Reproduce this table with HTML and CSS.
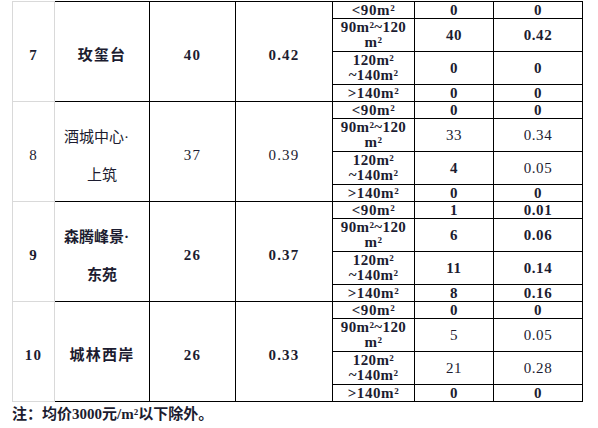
FILE: index.html
```html
<!DOCTYPE html>
<html lang="zh">
<head>
<meta charset="utf-8">
<link rel="stylesheet" href="styles.css">
</head>
<body>
<table class="grid">
<colgroup>
<col class="w1"><col class="w2"><col class="w3"><col class="w4"><col class="w5"><col class="w6"><col class="w7">
</colgroup>
<tbody>
<tr class="s">
<td rowspan="4" class="idx main b">7</td><td rowspan="4" class="main b">玫玺台</td><td rowspan="4" class="main b">40</td><td rowspan="4" class="main b">0.42</td>
<td class="b">&lt;90m²</td><td class="b">0</td><td class="b">0</td>
</tr>
<tr class="t"><td class="two b">90m²~120<br>m²</td><td class="b">40</td><td class="b">0.42</td></tr>
<tr class="t"><td class="two b">120m²<br>~140m²</td><td class="b">0</td><td class="b">0</td></tr>
<tr class="s"><td class="b">&gt;140m²</td><td class="b">0</td><td class="b">0</td></tr>

<tr class="s">
<td rowspan="4" class="idx main">8</td><td rowspan="4" class="main"><div class="name"><span class="first">酒城中心·</span><br>上筑</div></td><td rowspan="4" class="main">37</td><td rowspan="4" class="main">0.39</td>
<td class="b">&lt;90m²</td><td class="b">0</td><td class="b">0</td>
</tr>
<tr class="t"><td class="two b">90m²~120<br>m²</td><td>33</td><td>0.34</td></tr>
<tr class="t"><td class="two b">120m²<br>~140m²</td><td class="b">4</td><td>0.05</td></tr>
<tr class="s"><td class="b">&gt;140m²</td><td class="b">0</td><td class="b">0</td></tr>

<tr class="s">
<td rowspan="4" class="idx main b">9</td><td rowspan="4" class="main b"><div class="name"><span class="first">森腾峰景·</span><br>东苑</div></td><td rowspan="4" class="main b">26</td><td rowspan="4" class="main b">0.37</td>
<td class="b">&lt;90m²</td><td class="b">1</td><td class="b">0.01</td>
</tr>
<tr class="t"><td class="two b">90m²~120<br>m²</td><td class="b">6</td><td class="b">0.06</td></tr>
<tr class="t"><td class="two b">120m²<br>~140m²</td><td class="b">11</td><td class="b">0.14</td></tr>
<tr class="s"><td class="b">&gt;140m²</td><td class="b">8</td><td class="b">0.16</td></tr>

<tr class="s">
<td rowspan="4" class="idx main b">10</td><td rowspan="4" class="main b">城林西岸</td><td rowspan="4" class="main b">26</td><td rowspan="4" class="main b">0.33</td>
<td class="b">&lt;90m²</td><td class="b">0</td><td class="b">0</td>
</tr>
<tr class="t"><td class="two b">90m²~120<br>m²</td><td>5</td><td>0.05</td></tr>
<tr class="t"><td class="two b">120m²<br>~140m²</td><td>21</td><td>0.28</td></tr>
<tr class="s"><td class="b">&gt;140m²</td><td class="b">0</td><td class="b">0</td></tr>
</tbody>
</table>
<p class="note">注：均价3000元/m²以下除外。</p>
</body>
</html>
```

FILE: styles.css
```css
html, body {
  margin: 0;
  padding: 0;
  background: #ffffff;
}
body {
  padding: 1px 0 0 12px;
  color: #1c1c30;
  font-family: "Liberation Serif", "Noto Sans CJK SC", serif;
  font-size: 15px;
  letter-spacing: 0.6px;
}
.grid {
  border-collapse: collapse;
  table-layout: fixed;
  width: 571px;
}
.w1 { width: 42px; }
.w2 { width: 95px; }
.w3 { width: 86px; }
.w4 { width: 97px; }
.w5 { width: 82px; }
.w6 { width: 79px; }
.w7 { width: 89px; }
.grid td {
  border: 1px solid #000000;
  padding: 0;
  text-align: center;
  vertical-align: middle;
  line-height: 15px;
  font-weight: normal;
}
.grid td.b { font-weight: bold; }
.grid td.two { line-height: 15px; letter-spacing: 0.4px; }
.grid td.idx { border-color: #d9d9d9; }
.grid td.main { padding-top: 8px; letter-spacing: 1.2px; }
.grid tr.s { height: 17px; }
.grid tr.t { height: 33px; }
.name { line-height: 38px; letter-spacing: 0; }
.first { display: inline-block; padding-right: 11px; }
.note {
  margin: 0;
  padding-top: 2px;
  line-height: 20px;
  font-weight: bold;
  font-size: 15px;
  letter-spacing: 0;
}
```
